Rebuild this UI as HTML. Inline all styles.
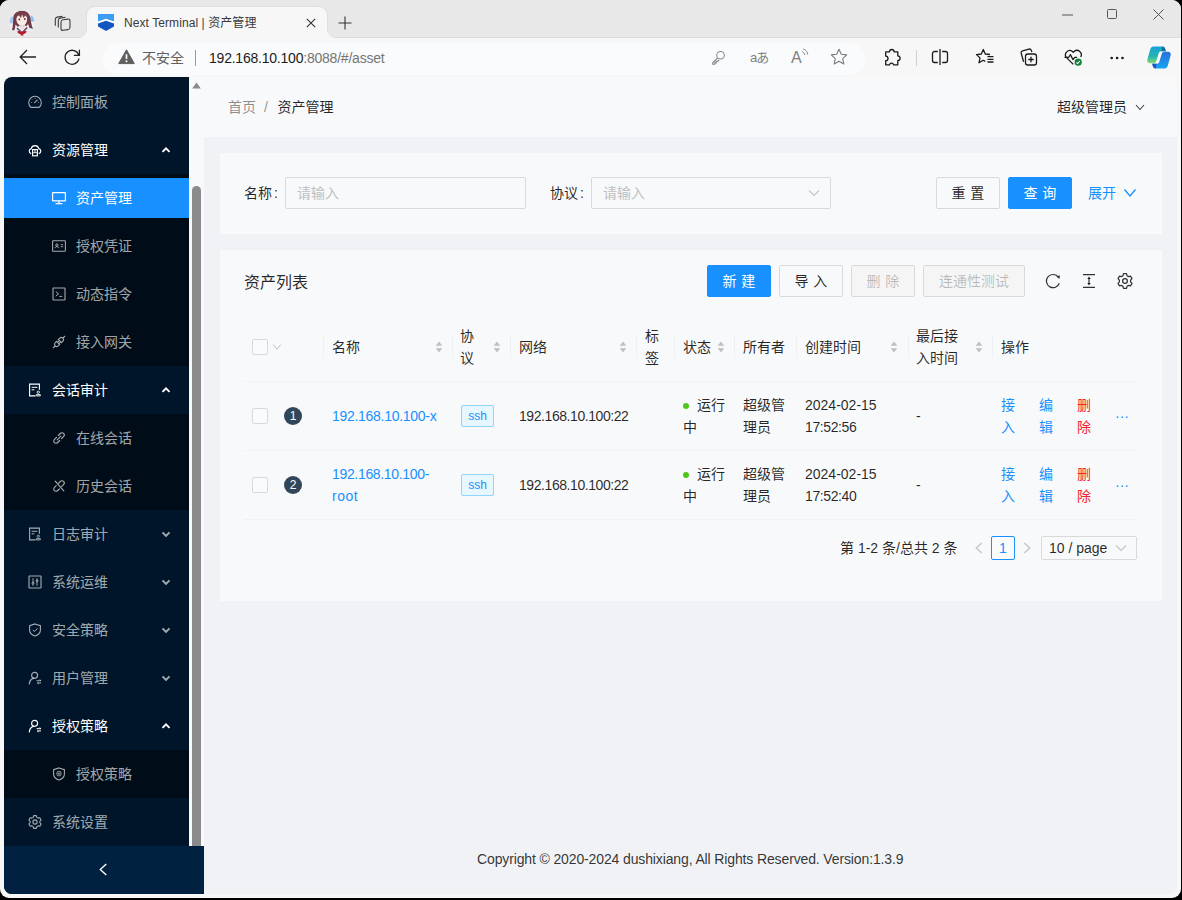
<!DOCTYPE html>
<html lang="zh-CN">
<head>
<meta charset="utf-8">
<title>Next Terminal | 资产管理</title>
<style>
*{box-sizing:border-box}
html,body{margin:0;padding:0}
body{width:1182px;height:900px;overflow:hidden;background:#000;font-family:"Liberation Sans","Noto Sans CJK SC",sans-serif;font-size:14px;color:rgba(0,0,0,.85);position:relative}
.abs{position:absolute}
#win{position:absolute;left:0;top:0;width:1180.5px;height:898px;border-radius:9px;background:#f7f7f8;overflow:hidden}
#titlebar{position:absolute;left:0;top:0;width:100%;height:38px;background:#e8e8e8;border-bottom:1px solid #dcdcdc}
#tab{position:absolute;left:87px;top:7px;width:240px;height:31px;background:#f7f7f8;border-radius:8px 8px 0 0;box-shadow:0 0 2px rgba(0,0,0,.12)}
#tab:before,#tab:after{content:"";position:absolute;bottom:0;width:8px;height:8px}
#tab:before{left:-8px;background:radial-gradient(circle at 0 0,rgba(247,247,248,0) 7.500px,#f7f7f8 8px)}
#tab:after{right:-8px;background:radial-gradient(circle at 100% 0,rgba(247,247,248,0) 7.500px,#f7f7f8 8px)}
#toolbar{position:absolute;left:0;top:38px;width:100%;height:39px;background:#f7f7f8}
#addr{position:absolute;left:103px;top:4.5px;width:762px;height:32px;border-radius:16px;background:#fafbfc}
#page{position:absolute;left:4px;top:77px;width:1173px;height:816.5px;border-radius:8px;overflow:hidden;background:#f0f2f5}
#sider{position:absolute;left:0;top:0;width:200px;height:100%;background:#001529}
#strack{position:absolute;left:185px;top:0;width:15px;height:769px;background:#f8f9fa;overflow:hidden}
#trigger{position:absolute;left:0;top:769px;width:200px;height:48px;background:#002140}
#header{position:absolute;left:200px;top:0;width:973px;height:60px;background:#f8f9fa}
.card{position:absolute;background:#f8f9fa}
.mi{position:absolute;left:0;width:185px;height:48px;line-height:48px;color:rgba(255,255,255,.65);font-size:14px;white-space:nowrap}
.mi .t{position:absolute;left:48px;top:0}
.mi.sub .t{left:72px}
.mi.open{color:#fff}
.mi svg.ic{position:absolute;left:24px;top:17px;width:14px;height:14px}
.mi.sub svg.ic{left:48px}
.mi svg.ar{position:absolute;left:157px;top:19px;width:10px;height:10px}
.subbg{position:absolute;left:0;width:185px;background:#000c17}

#ov{position:absolute;left:0;top:0;width:1182px;height:900px}
#ov .card{position:absolute;background:#f8f9fa}
.t{white-space:nowrap}
.tx{position:absolute;white-space:nowrap;line-height:22px;height:22px}
.inp{position:absolute;height:32px;border:1px solid #d9d9d9;border-radius:2px;background:#f8f9fa;color:#bfbfbf;line-height:30px;padding-left:11px}
.btn{position:absolute;height:32px;border:1px solid #d9d9d9;border-radius:2px;background:#f8f9fa;line-height:30px;text-align:center;white-space:nowrap;color:rgba(0,0,0,.85)}
.btn.pri{background:#1890ff;border-color:#1890ff;color:#fff}
.btn.dis{background:#f5f5f5;color:rgba(0,0,0,.25)}
.vd{position:absolute;width:1px;height:22px;top:336px;background:rgba(0,0,0,.035)}
.hd{position:absolute;left:244px;width:893px;height:1px;background:#f1f2f4}
.cb{position:absolute;width:16px;height:16px;border:1px solid #d9d9d9;border-radius:2px;background:#fafbfc}
.sort{position:absolute;width:8px;height:14px;top:340px}
.blue{color:#1890ff}.red{color:#f5222d}
.idx{position:absolute;width:18px;height:18px;border-radius:9px;background:#314659;color:#fff;font-size:12px;line-height:18px;text-align:center}
.tag{position:absolute;height:22px;border:1px solid #91d5ff;background:#e6f7ff;color:#1890ff;font-size:12px;line-height:20px;border-radius:2px;width:33px;text-align:center}
.dot{position:absolute;width:6px;height:6px;border-radius:3px;background:#52c41a}
</style>
</head>
<body>
<svg width="0" height="0" style="position:absolute">
<defs>
<g id="i-dash" fill="none" stroke="currentColor" stroke-width="1.1"><path d="M2.9 12.4 A6.3 6.3 0 1 1 11.1 12.4 Z"/><path d="M6.6 7.6 9.2 5.2" stroke-linecap="round"/><path d="M7 3v.8M3.3 7.4h.8M10 7.4h.8M4.3 4.6l.5.5" stroke-width=".9"/></g>
<g id="i-cloud" fill="none" stroke="currentColor" stroke-width="1.15"><path d="M3.2 10.6 C.4 9.6.6 6.2 3.3 5.6 4 1.6 10 1.6 10.7 5.6 13.4 6.2 13.6 9.6 10.8 10.6"/><rect x="4.6" y="6.6" width="4.8" height="6.2"/><path d="M4.6 9.7h4.8M7 6.8v2.6" stroke-width=".9"/></g>
<g id="i-desktop" fill="none" stroke="currentColor" stroke-width="1.2"><rect x=".6" y="1.6" width="12.8" height="8.2" rx=".4"/><path d="M7 9.8v2.4M3.6 12.6h6.8"/></g>
<g id="i-idcard" fill="none" stroke="currentColor" stroke-width="1.1"><rect x=".6" y="1.8" width="12.8" height="10.4" rx=".6"/><circle cx="4.9" cy="6.1" r="1.2" stroke-width=".9"/><path d="M2.9 9.2c.3-2 3.700-2 4 0M8.700 5.700h2.500M8.700 7.700h2.500" stroke-width=".9"/></g>
<g id="i-code" fill="none" stroke="currentColor" stroke-width="1.1"><rect x="1" y="1" width="12" height="12" rx=".4"/><path d="M3.800 4.600 6.500 6.800 3.800 9M7.300 9.400h2.900" stroke-width="1"/></g>
<g id="i-api" fill="none" stroke="currentColor" stroke-width="1.1"><path d="M7.600 3.300c1-1 2.300-1 3.200-.1s.9 2.200-.1 3.200L9.500 7.600 6.400 4.500zM6.400 10.700c-1 1-2.300 1-3.200.1s-.9-2.200.1-3.200L4.500 6.400 7.600 9.500zM10.900 3.100 13 1M3.100 10.900 1 13M5.600 7.200 6.800 6M7.200 8.400 8.400 7.200"/></g>
<g id="i-audit" fill="none" stroke="currentColor" stroke-width="1.1"><path d="M7.600 12.900H1.600V1.100h9.800v5.600"/><path d="M3.600 4.300h5.800M3.600 6.800h2.800" stroke-width="1"/><circle cx="10.300" cy="9.200" r="1.150" stroke-width=".9"/><path d="M8.400 12.900v-1.300h3.900v1.300z" stroke-width=".9"/></g>
<g id="i-link" fill="none" stroke="currentColor" stroke-width="1.15" stroke-linecap="round"><path d="M6.300 4.500 8.300 2.500c1-1 2.400-1 3.300-.1s.9 2.300-.1 3.300l-2 2"/><path d="M7.700 9.500l-2 2c-1 1-2.400 1-3.300.1s-.9-2.300.1-3.300l2-2"/><path d="M5.200 8.800 8.800 5.200"/></g>
<g id="i-disc" fill="none" stroke="currentColor" stroke-width="1.15" stroke-linecap="round"><path d="M6.600 4.200 8.300 2.500c1-1 2.400-1 3.300-.1s.9 2.300-.1 3.300L9.800 7.400"/><path d="M7.400 9.800 5.700 11.500c-1 1-2.400 1-3.300.1s-.9-2.300.1-3.300L4.200 6.600"/><path d="M3.200 2.200 11.800 11.800"/></g>
<g id="i-control" fill="none" stroke="currentColor" stroke-width="1.1"><rect x="1" y="1" width="12" height="12" rx=".4"/><path d="M5 3.200v7.600M9 3.200v7.600" stroke-width=".9"/><circle cx="5" cy="8.200" r="1" fill="#001529" stroke-width=".9"/><circle cx="9" cy="5.800" r="1" fill="#001529" stroke-width=".9"/></g>
<g id="i-safety" fill="none" stroke="currentColor" stroke-width="1.1"><path d="M7 .9 12.400 2.700V7.200c0 2.600-2.300 4.700-5.400 5.900C3.900 11.900 1.600 9.800 1.600 7.200V2.700z"/><path d="M4.700 6.800 6.400 8.500 9.500 5.300" stroke-width="1"/></g>
<g id="i-user" fill="none" stroke="currentColor" stroke-width="1.15"><circle cx="6.600" cy="4.300" r="3"/><path d="M1.300 13c.3-3 2.200-5.100 4.300-5.600" stroke-linecap="round"/><path d="M8.600 9.700h4.400M9.200 11.900h3.800" stroke-width="1"/><path d="M11.600 8.600 13 9.700M10.600 13 9.200 11.900" stroke-width=".9"/></g>
<g id="i-insure" fill="none" stroke="currentColor" stroke-width="1.1"><path d="M7 .9 12.400 2.700V7.200c0 2.600-2.300 4.700-5.400 5.900C3.900 11.900 1.600 9.800 1.600 7.200V2.700z"/><rect x="5" y="4.400" width="4" height="4.400" rx="1.400" stroke-width=".9"/><path d="M7 5.200v3M5.700 6.700h2.600" stroke-width=".7"/></g>
<g id="i-setting" fill="none" stroke="currentColor" stroke-width="1.1" stroke-linejoin="round"><path d="M5.700 1h2.600l.5 1.700 1.300.8 1.700-.4 1.300 2.200-1.200 1.300v1.500l1.200 1.300-1.300 2.200-1.700-.4-1.300.8L8.300 13.700H5.700l-.5-1.700-1.300-.8-1.700.4L.9 9.400l1.200-1.300V6.600L.9 5.300 2.200 3.100l1.700.4 1.300-.8z" transform="translate(0 -.35)"/><circle cx="7" cy="7" r="2.100"/></g>
</defs>
</svg>
<div id="win">
 <div id="titlebar">
  <div id="tab"></div>
 </div>
 <div id="toolbar">
  <div id="addr"></div>
 </div>
 <div id="page">
  <div id="sider">
   <div id="menu">
<div class="subbg" style="top:97px;height:192px"></div>
<div class="subbg" style="top:337px;height:96px"></div>
<div class="subbg" style="top:673px;height:48px"></div>
<div class="abs" style="left:0;top:101px;width:185px;height:40px;background:#1890ff"></div>
<div class="mi" style="top:1px"><svg class="ic" viewBox="0 0 14 14"><use href="#i-dash"/></svg><span class="t">控制面板</span></div>
<div class="mi open" style="top:49px"><svg class="ic" viewBox="0 0 14 14"><use href="#i-cloud"/></svg><span class="t">资源管理</span><svg class="ar" viewBox="0 0 10 10"><path d="M1.5 6.8 5 3.3 8.5 6.8" fill="none" stroke="currentColor" stroke-width="1.9"/></svg></div>
<div class="mi sub open" style="top:97px"><svg class="ic" viewBox="0 0 14 14"><use href="#i-desktop"/></svg><span class="t">资产管理</span></div>
<div class="mi sub" style="top:145px"><svg class="ic" viewBox="0 0 14 14"><use href="#i-idcard"/></svg><span class="t">授权凭证</span></div>
<div class="mi sub" style="top:193px"><svg class="ic" viewBox="0 0 14 14"><use href="#i-code"/></svg><span class="t">动态指令</span></div>
<div class="mi sub" style="top:241px"><svg class="ic" viewBox="0 0 14 14"><use href="#i-api"/></svg><span class="t">接入网关</span></div>
<div class="mi open" style="top:289px"><svg class="ic" viewBox="0 0 14 14"><use href="#i-audit"/></svg><span class="t">会话审计</span><svg class="ar" viewBox="0 0 10 10"><path d="M1.5 6.8 5 3.3 8.5 6.8" fill="none" stroke="currentColor" stroke-width="1.9"/></svg></div>
<div class="mi sub" style="top:337px"><svg class="ic" viewBox="0 0 14 14"><use href="#i-link"/></svg><span class="t">在线会话</span></div>
<div class="mi sub" style="top:385px"><svg class="ic" viewBox="0 0 14 14"><use href="#i-disc"/></svg><span class="t">历史会话</span></div>
<div class="mi" style="top:433px"><svg class="ic" viewBox="0 0 14 14"><use href="#i-audit"/></svg><span class="t">日志审计</span><svg class="ar" viewBox="0 0 10 10"><path d="M1.5 3.3 5 6.8 8.5 3.3" fill="none" stroke="currentColor" stroke-width="1.9"/></svg></div>
<div class="mi" style="top:481px"><svg class="ic" viewBox="0 0 14 14"><use href="#i-control"/></svg><span class="t">系统运维</span><svg class="ar" viewBox="0 0 10 10"><path d="M1.5 3.3 5 6.8 8.5 3.3" fill="none" stroke="currentColor" stroke-width="1.9"/></svg></div>
<div class="mi" style="top:529px"><svg class="ic" viewBox="0 0 14 14"><use href="#i-safety"/></svg><span class="t">安全策略</span><svg class="ar" viewBox="0 0 10 10"><path d="M1.5 3.3 5 6.8 8.5 3.3" fill="none" stroke="currentColor" stroke-width="1.9"/></svg></div>
<div class="mi" style="top:577px"><svg class="ic" viewBox="0 0 14 14"><use href="#i-user"/></svg><span class="t">用户管理</span><svg class="ar" viewBox="0 0 10 10"><path d="M1.5 3.3 5 6.8 8.5 3.3" fill="none" stroke="currentColor" stroke-width="1.9"/></svg></div>
<div class="mi open" style="top:625px"><svg class="ic" viewBox="0 0 14 14"><use href="#i-user"/></svg><span class="t">授权策略</span><svg class="ar" viewBox="0 0 10 10"><path d="M1.5 6.8 5 3.3 8.5 6.8" fill="none" stroke="currentColor" stroke-width="1.9"/></svg></div>
<div class="mi sub" style="top:673px"><svg class="ic" viewBox="0 0 14 14"><use href="#i-insure"/></svg><span class="t">授权策略</span></div>
<div class="mi" style="top:721px"><svg class="ic" viewBox="0 0 14 14"><use href="#i-setting"/></svg><span class="t">系统设置</span></div>
</div>
   <div id="strack"><svg class="abs" style="left:3px;top:5px" width="9" height="7" viewBox="0 0 9 7"><path d="M4.500.4 8.800 6.400H.2z" fill="#8a8a8a"/></svg><div class="abs" style="left:3px;top:109px;width:9px;height:664px;border-radius:4.500px;background:#8b8b8b"></div></div>
   <div id="trigger"><svg class="abs" style="left:94px;top:17px" width="10" height="13" viewBox="0 0 10 13"><path d="M8.300 1 2.300 6.500 8.300 12" fill="none" stroke="#fff" stroke-width="1.400"/></svg></div>
  </div>
  <div id="header"></div>
  <div id="content"></div>
 </div>
 <div id="ov">
<!--CH-->
<!-- title bar -->
<svg class="abs" id="avatar" style="left:9px;top:10px" width="26" height="26" viewBox="0 0 26 26"><defs><clipPath id="avc"><circle cx="13" cy="13" r="12.500"/></clipPath><filter id="avb" x="-10%" y="-10%" width="120%" height="120%"><feGaussianBlur stdDeviation=".55"/></filter></defs><g clip-path="url(#avc)"><rect width="26" height="26" fill="#f1eff6"/><g filter="url(#avb)"><ellipse cx="2.500" cy="10" rx="2.600" ry="3.500" fill="#a9c6f2"/><ellipse cx="23.500" cy="8.500" rx="2.300" ry="3.200" fill="#8fbef0"/><path d="M4.500 6C6 2 10 .6 13.500.8 18 1 20.500 3.500 21.300 7.500c.7 4 1.200 8 2.700 11.200l-3.500-.7L19 14l-2.500 3.500h-7L6.500 14.500 5.500 21 3 20c1.200-4 1-9.500 1.500-14z" fill="#6e3c47"/><path d="M7.500 7.500c1-2 3.300-3 5.500-3s4.300 1 5 3c.5 2.500-.2 5.300-1.800 6.900-1.200 1.200-2.300 1.700-3.400 1.700s-2.600-.7-3.700-2C7.600 12.500 7 9.800 7.500 7.500z" fill="#f8ebe4"/><path d="M7 8.500 9.200 4.500 12 8.200 13 4.200 14.500 8 17 4.600 18.800 8.800 19.500 4 13 1.500 6.500 4z" fill="#7a3f4a"/><circle cx="10.300" cy="9.500" r=".9" fill="#8c2230"/><circle cx="15.800" cy="9" r=".9" fill="#6b2a2a"/><path d="M10.500 15.500 13 18.500 15.500 15 17.500 16.500 22 19v8H4v-6l4.500-4z" fill="#ece7f2"/><path d="M10.800 15.300h4.200L13 21z" fill="#f6dcd8"/><path d="M8.500 17.500 13 22l4.500-5 1.200 1L13 24 7.500 18.500z" fill="#5a4a5c"/><path d="M8 21.500c2-1 3.500-.5 5 .3 1.500-.8 3.200-1.300 5-.2-.8 1.600-2.500 2.500-4 2.600l1.500 2.500h-5l1.500-2.500c-1.600 0-3.200-1-4-2.700z" fill="#b31d2b"/></g></g></svg>
<svg class="abs" style="left:53px;top:13px" width="20" height="20" viewBox="0 0 20 20" fill="none" stroke="#3b3b3b" stroke-width="1.1"><rect x="8" y="6.500" width="9" height="10.500" rx="2" transform="skewY(-8) translate(0 1.700)"/><path d="M5.300 14.500V7.300c0-1.200.7-2 1.800-2.200l5.400-.9M2.300 12.800V6.300c0-1.200.7-2 1.800-2.200l5.400-.9"/></svg>
<svg class="abs" style="left:98px;top:14px" width="16" height="17" viewBox="0 0 16 17"><path d="M0 0h16v7.500l-8 2.600-8-2.600z" fill="#3d9df5"/><path d="M0 8.700 8 6.100l8 2.600v3.900L8 17 0 12.600z" fill="#1356c2"/><path d="M0 7.400 8 4.800l8 2.600v2L8 6.800 0 9.400z" fill="#fff"/></svg>
<div class="abs" id="tabtitle" style="left:124px;top:13px;height:20px;line-height:20px;font-size:12px;color:#3a3a3a;white-space:nowrap;letter-spacing:.08px">Next Terminal | 资产管理</div>
<svg class="abs" style="left:306px;top:18px" width="10" height="10" viewBox="0 0 10 10"><path d="M.8.800 9.200 9.200M9.200.8.800 9.200" stroke="#333" stroke-width="1.100" fill="none"/></svg>
<svg class="abs" style="left:338px;top:16px" width="14" height="14" viewBox="0 0 14 14"><path d="M7 .5v13M.5 7h13" stroke="#333" stroke-width="1.100" fill="none"/></svg>
<svg class="abs" style="left:1062px;top:14px" width="11" height="2" viewBox="0 0 11 2"><path d="M0 1h11" stroke="#555" stroke-width="1"/></svg>
<div class="abs" style="left:1107px;top:9px;width:10px;height:10px;border:1px solid #555;border-radius:1.500px"></div>
<svg class="abs" style="left:1153px;top:9px" width="11" height="11" viewBox="0 0 11 11"><path d="M.5.500 10.500 10.500M10.500.5.500 10.500" stroke="#555" stroke-width="1" fill="none"/></svg>
<!-- toolbar -->
<svg class="abs" style="left:19px;top:49px" width="18" height="16" viewBox="0 0 18 16" fill="none" stroke="#222" stroke-width="1.300"><path d="M17 8H1.500M8 1 1.200 8 8 15"/></svg>
<svg class="abs" style="left:63px;top:48px" width="18" height="18" viewBox="0 0 18 18" fill="none" stroke="#222" stroke-width="1.300"><path d="M15.800 7.200A7 7 0 1 0 16 10.500"/><path d="M16.400 1.800v5.500h-5.500"/></svg>
<svg class="abs" style="left:118px;top:49px" width="17" height="16" viewBox="0 0 17 16"><path d="M8.500.8 16.300 14.600H.7z" fill="#5f5f5f" stroke="#5f5f5f" stroke-width="1" stroke-linejoin="round"/><path d="M8.500 5.300v4.700" stroke="#fcfcfc" stroke-width="1.700"/><circle cx="8.500" cy="12.300" r="1" fill="#fcfcfc"/></svg>
<div class="abs" style="left:142px;top:47px;height:22px;line-height:22px;font-size:14px;color:#5f5f5f;white-space:nowrap" id="unsafe">不安全</div>
<div class="abs" style="left:195px;top:50px;width:1px;height:16px;background:#9a9a9a"></div>
<div class="abs" id="url" style="left:209px;top:47px;height:22px;line-height:22px;font-size:14px;color:#1b1b1b;white-space:nowrap;letter-spacing:-.22px">192.168.10.100<span style="color:#757575">:8088/#/asset</span></div>
<!-- pill icons -->
<svg class="abs" style="left:711px;top:50px" width="15" height="15" viewBox="0 0 17 17" fill="none" stroke="#858585" stroke-width="1.200"><circle cx="10.800" cy="6" r="4.300"/><path d="M7.600 8.900 2 14.500v1.700h2.300v-1.600h1.600v-1.700h1.500l1.700-1.700"/></svg>
<div class="abs" style="left:750px;top:47px;height:22px;line-height:22px;font-size:13px;color:#808080;white-space:nowrap;font-family:'Liberation Sans','Noto Sans CJK JP',sans-serif;letter-spacing:-1px">aあ</div>
<div class="abs" style="left:791px;top:47px;height:22px;line-height:22px;font-size:16px;color:#808080;white-space:nowrap">A</div>
<svg class="abs" style="left:801px;top:48px" width="9" height="10" viewBox="0 0 9 10" fill="none" stroke="#858585" stroke-width="1"><path d="M1.200 3.600c1.500.6 2.300 1.800 2.600 3.400M2.300.9C5 1.900 6.400 4 6.800 6.600"/></svg>
<svg class="abs" style="left:830px;top:48px" width="18" height="18" viewBox="0 0 18 18" fill="none" stroke="#7a7a7a" stroke-width="1.100" stroke-linejoin="round"><path d="M9 1.300 11.300 6.300 16.700 6.900 12.700 10.600 13.800 16 9 13.300 4.200 16 5.300 10.600 1.300 6.900 6.700 6.300z"/></svg>
<!-- outer icons -->
<svg class="abs" style="left:883px;top:48px" width="18" height="19" viewBox="0 0 18 19" fill="none" stroke="#1b1b1b" stroke-width="1.300" stroke-linejoin="round"><path d="M6.500 3.800a2.300 2.300 0 0 1 4.600 0h3.700v4.100a2.300 2.300 0 0 1 0 4.600v4.300h-4.200a2.100 2.100 0 0 0-4.100 0H2.700v-4.100a2.300 2.300 0 0 0 0-4.600V3.800z"/></svg>
<div class="abs" style="left:916px;top:50px;width:1px;height:16px;background:#d0d0d0"></div>
<svg class="abs" style="left:931px;top:48px" width="18" height="18" viewBox="0 0 18 18" fill="none" stroke="#1b1b1b" stroke-width="1.300"><path d="M6.800 3.500H3.500a2 2 0 0 0-2 2v7a2 2 0 0 0 2 2h3.300M11.200 3.500h3.300a2 2 0 0 1 2 2v7a2 2 0 0 1-2 2h-3.300M9 1v16"/></svg>
<svg class="abs" style="left:975px;top:48px" width="20" height="18" viewBox="0 0 20 18" fill="none" stroke="#1b1b1b" stroke-width="1.300" stroke-linejoin="round"><path d="M8.300 1.500 10.300 6l4.700.5M10.300 6 8.300 1.500 6.300 6 1.500 6.600 5 9.900 4 14.800 8.300 12.300 10.200 13.400M12.500 8.600h6M12.500 11.300h6M12.500 14h6"/></svg>
<svg class="abs" style="left:1019px;top:47px" width="20" height="20" viewBox="0 0 20 20" fill="none" stroke="#1b1b1b" stroke-width="1.300"><rect x="6.500" y="7" width="11" height="11" rx="2.300"/><path d="M12 9.800v5.400M9.300 12.500h5.400M4.600 14.800 2.200 6.300a2 2 0 0 1 1.400-2.500l6.300-1.700a2 2 0 0 1 2.400 1.300l.6 1.700"/></svg>
<svg class="abs" style="left:1063px;top:48px" width="22" height="20" viewBox="0 0 22 20" fill="none" stroke="#1b1b1b" stroke-width="1.300" stroke-linejoin="round"><path d="M10.300 16.400 3.500 9.600a4.300 4.300 0 0 1 6-6.100l.8.800.8-.8a4.300 4.300 0 0 1 6.500 5.500"/><path d="M1.500 9.300h4.300l1.600-2.700 2.600 5 1.700-2.300h2.400" stroke-width="1.200"/><circle cx="15.200" cy="14.200" r="3.600" fill="#15803d" stroke="none"/><path d="M13.500 14.300 14.700 15.500 16.900 13" stroke="#fff" stroke-width="1.100"/></svg>
<svg class="abs" style="left:1109px;top:56px" width="17" height="4" viewBox="0 0 17 4"><circle cx="2.700" cy="2" r="1.350" fill="#1b1b1b"/><circle cx="8.100" cy="2" r="1.350" fill="#1b1b1b"/><circle cx="13.500" cy="2" r="1.350" fill="#1b1b1b"/></svg>
<svg class="abs" style="left:1146px;top:45px" width="26" height="25" viewBox="0 0 26 25"><defs><linearGradient id="cg1" x1="0" y1="0" x2="0" y2="1"><stop offset="0" stop-color="#1aa0d8"/><stop offset=".6" stop-color="#22b5b0"/><stop offset="1" stop-color="#8fd96a"/></linearGradient><linearGradient id="cg2" x1="0" y1="0" x2="0" y2="1"><stop offset="0" stop-color="#2a6fe0"/><stop offset="1" stop-color="#18a4ee"/></linearGradient></defs><path d="M7.500 1.500h8.800c1.300 0 2.300.8 2.700 2l.8 2.700h-4.300c-1.500 0-2.400.8-2.900 2.300l-2.300 7.500c-.5 1.500-1.600 2.300-3.100 2.300H3.900c-1.900 0-3.100-1.600-2.600-3.500l2.900-10.300C4.700 2.600 5.900 1.500 7.500 1.500z" fill="url(#cg1)"/><path d="M18.500 23.500H9.700c-1.300 0-2.300-.8-2.700-2l-.8-2.700h4.300c1.500 0 2.400-.8 2.900-2.300l2.300-7.500c.5-1.500 1.600-2.300 3.100-2.300h3.300c1.900 0 3.100 1.600 2.600 3.500l-2.900 10.300c-.5 1.900-1.700 3-3.300 3z" fill="url(#cg2)"/><path d="M16.300 1.500c1.300 0 2.300.8 2.700 2l.8 2.700h-4.300z" fill="#0d6fa0"/><path d="M9.700 23.500c-1.300 0-2.300-.8-2.700-2l-.8-2.700h4.300z" fill="#2450c8"/></svg>
<!--/CH-->
<!--OV-->
<!-- header -->
<div class="tx" style="left:228px;top:96px;color:rgba(0,0,0,.45)">首页<span style="margin:0 9.500px 0 8px">/</span><span style="color:rgba(0,0,0,.85)">资产管理</span></div>
<div class="tx" style="left:1057px;top:96px">超级管理员</div>
<svg class="abs" style="left:1135px;top:102px" width="10" height="10" viewBox="0 0 10 10"><path d="M1 3 5 7.500 9 3" fill="none" stroke="rgba(0,0,0,.75)" stroke-width="1.1"/></svg>
<!-- search card -->
<div class="card" style="left:220px;top:153px;width:942px;height:81px"></div>
<div class="tx" style="left:244px;top:182px">名称<span style="margin-left:2px">:</span></div>
<div class="inp" style="left:285px;top:177px;width:241px">请输入</div>
<div class="tx" style="left:550px;top:182px">协议<span style="margin-left:2px">:</span></div>
<div class="inp" style="left:591px;top:177px;width:240px">请输入</div>
<svg class="abs" style="left:808px;top:188px" width="12" height="10" viewBox="0 0 12 10"><path d="M1 2.500 6 7.500 11 2.500" fill="none" stroke="#c4c4c4" stroke-width="1.1"/></svg>
<div class="btn" style="left:936px;top:177px;width:64px;letter-spacing:4.76px;padding-left:4.76px">重置</div>
<div class="btn pri" style="left:1008px;top:177px;width:64px;letter-spacing:4.76px;padding-left:4.76px">查询</div>
<div class="tx blue" style="left:1088px;top:182px">展开</div>
<svg class="abs" style="left:1123px;top:187px" width="14" height="12" viewBox="0 0 14 12"><path d="M1.500 2.500 7 9 12.500 2.500" fill="none" stroke="#1890ff" stroke-width="1.3"/></svg>
<!-- table card -->
<div class="card" style="left:220px;top:250px;width:942px;height:351px"></div>
<div class="tx" style="left:244px;top:271.5px;font-size:16px">资产列表</div>
<div class="btn pri" style="left:707px;top:265px;width:64px;letter-spacing:4.76px;padding-left:4.76px">新建</div>
<div class="btn" style="left:779px;top:265px;width:64px;letter-spacing:4.76px;padding-left:4.76px">导入</div>
<div class="btn dis" style="left:851px;top:265px;width:64px;letter-spacing:4.76px;padding-left:4.76px">删除</div>
<div class="btn dis" style="left:923px;top:265px;width:102px">连通性测试</div>
<svg class="abs" style="left:1045px;top:273px" width="16" height="16" viewBox="0 0 16 16"><path d="M13 3.700A6.600 6.600 0 1 0 14.300 10.300" fill="none" stroke="rgba(0,0,0,.8)" stroke-width="1.200"/><path d="M11.500 3.700 14.800 2.300 14.500 6z" fill="rgba(0,0,0,.8)"/></svg>
<svg class="abs" style="left:1081px;top:273px" width="16" height="16" viewBox="0 0 16 16"><path d="M2 1.600h12M2 14.400h12M8 5v6" fill="none" stroke="rgba(0,0,0,.8)" stroke-width="1.200"/><path d="M8 3.400 6.300 6h3.400zM8 12.600 6.300 10h3.400z" fill="rgba(0,0,0,.8)"/></svg>
<svg class="abs" style="left:1117px;top:273px;color:rgba(0,0,0,.8)" width="16" height="16" viewBox="0 0 14 14"><use href="#i-setting"/></svg>
<!-- table header -->
<div class="cb" style="left:252px;top:339px"></div>
<svg class="abs" style="left:272px;top:342px" width="10" height="10" viewBox="0 0 10 10"><path d="M1.200 2.500 5 7.200 8.800 2.500" fill="none" stroke="#bfbfbf" stroke-width="1"/></svg>
<div class="vd" style="left:323px"></div><div class="vd" style="left:452px"></div><div class="vd" style="left:510px"></div><div class="vd" style="left:636px"></div><div class="vd" style="left:674px"></div><div class="vd" style="left:734px"></div><div class="vd" style="left:796px"></div><div class="vd" style="left:908px"></div><div class="vd" style="left:992px"></div>
<div class="tx" style="left:332px;top:336px">名称</div>
<div class="tx" style="left:460px;top:325px">协</div><div class="tx" style="left:460px;top:347px">议</div>
<div class="tx" style="left:519px;top:336px">网络</div>
<div class="tx" style="left:645px;top:325px">标</div><div class="tx" style="left:645px;top:347px">签</div>
<div class="tx" style="left:683px;top:336px">状态</div>
<div class="tx" style="left:743px;top:336px">所有者</div>
<div class="tx" style="left:805px;top:336px">创建时间</div>
<div class="tx" style="left:916px;top:325px">最后接</div><div class="tx" style="left:916px;top:347px">入时间</div>
<div class="tx" style="left:1001px;top:336px">操作</div>
<svg class="sort" style="left:435px" viewBox="0 0 8 14"><path d="M4 1.500 7.300 5.800H.7z" fill="#bfbfbf"/><path d="M4 12.500 7.300 8.200H.7z" fill="#bfbfbf"/></svg>
<svg class="sort" style="left:493px" viewBox="0 0 8 14"><path d="M4 1.500 7.300 5.800H.7z" fill="#bfbfbf"/><path d="M4 12.500 7.300 8.200H.7z" fill="#bfbfbf"/></svg>
<svg class="sort" style="left:619px" viewBox="0 0 8 14"><path d="M4 1.500 7.300 5.800H.7z" fill="#bfbfbf"/><path d="M4 12.500 7.300 8.200H.7z" fill="#bfbfbf"/></svg>
<svg class="sort" style="left:717px" viewBox="0 0 8 14"><path d="M4 1.500 7.300 5.800H.7z" fill="#bfbfbf"/><path d="M4 12.500 7.300 8.200H.7z" fill="#bfbfbf"/></svg>
<svg class="sort" style="left:890px" viewBox="0 0 8 14"><path d="M4 1.500 7.300 5.800H.7z" fill="#bfbfbf"/><path d="M4 12.500 7.300 8.200H.7z" fill="#bfbfbf"/></svg>
<svg class="sort" style="left:975px" viewBox="0 0 8 14"><path d="M4 1.500 7.300 5.800H.7z" fill="#bfbfbf"/><path d="M4 12.500 7.300 8.200H.7z" fill="#bfbfbf"/></svg>
<div class="hd" style="top:381px"></div><div class="hd" style="top:450px"></div><div class="hd" style="top:519px"></div>
<!-- row 1 -->
<div class="cb" style="left:252px;top:408px"></div>
<div class="idx" style="left:284px;top:407px">1</div>
<div class="tx blue" style="left:332px;top:405px;letter-spacing:-.29px">192.168.10.100-x</div>
<div class="tag" style="left:461px;top:405px">ssh</div>
<div class="tx" style="left:519px;top:405px;letter-spacing:-.43px">192.168.10.100:22</div>
<div class="dot" style="left:683px;top:403px"></div>
<div class="tx" style="left:697px;top:394px">运行</div><div class="tx" style="left:683px;top:416px">中</div>
<div class="tx" style="left:743px;top:394px">超级管</div><div class="tx" style="left:743px;top:416px">理员</div>
<div class="tx" style="left:805px;top:394px">2024-02-15</div><div class="tx" style="left:805px;top:416px;letter-spacing:-.39px">17:52:56</div>
<div class="tx" style="left:916px;top:405px">-</div>
<div class="tx blue" style="left:1001px;top:394px">接</div><div class="tx blue" style="left:1001px;top:416px">入</div>
<div class="tx blue" style="left:1039px;top:394px">编</div><div class="tx blue" style="left:1039px;top:416px">辑</div>
<div class="tx red" style="left:1077px;top:394px">删</div><div class="tx red" style="left:1077px;top:416px">除</div>
<div class="tx blue" style="left:1115px;top:405px">···</div>
<!-- row 2 -->
<div class="cb" style="left:252px;top:477px"></div>
<div class="idx" style="left:284px;top:476px">2</div>
<div class="tx blue" style="left:332px;top:463px;letter-spacing:-.33px">192.168.10.100-</div><div class="tx blue" style="left:332px;top:485px;letter-spacing:.47px">root</div>
<div class="tag" style="left:461px;top:474px">ssh</div>
<div class="tx" style="left:519px;top:474px;letter-spacing:-.43px">192.168.10.100:22</div>
<div class="dot" style="left:683px;top:472px"></div>
<div class="tx" style="left:697px;top:463px">运行</div><div class="tx" style="left:683px;top:485px">中</div>
<div class="tx" style="left:743px;top:463px">超级管</div><div class="tx" style="left:743px;top:485px">理员</div>
<div class="tx" style="left:805px;top:463px">2024-02-15</div><div class="tx" style="left:805px;top:485px;letter-spacing:-.39px">17:52:40</div>
<div class="tx" style="left:916px;top:474px">-</div>
<div class="tx blue" style="left:1001px;top:463px">接</div><div class="tx blue" style="left:1001px;top:485px">入</div>
<div class="tx blue" style="left:1039px;top:463px">编</div><div class="tx blue" style="left:1039px;top:485px">辑</div>
<div class="tx red" style="left:1077px;top:463px">删</div><div class="tx red" style="left:1077px;top:485px">除</div>
<div class="tx blue" style="left:1115px;top:474px">···</div>
<!-- pagination -->
<div class="tx" style="left:840px;top:537px">第 1-2 条/总共 2 条</div>
<svg class="abs" style="left:973px;top:542px" width="12" height="12" viewBox="0 0 10 10"><path d="M7.300 .8 2.700 5 7.300 9.200" fill="none" stroke="#c4c4c4" stroke-width="1.1"/></svg>
<div class="abs blue" style="left:991px;top:536px;width:24px;height:24px;border:1px solid #1890ff;border-radius:2px;line-height:22px;text-align:center;background:#fafbfc">1</div>
<svg class="abs" style="left:1021px;top:542px" width="12" height="12" viewBox="0 0 10 10"><path d="M2.700 .8 7.300 5 2.700 9.200" fill="none" stroke="#c4c4c4" stroke-width="1.1"/></svg>
<div class="abs" style="left:1041px;top:536px;width:96px;height:24px;border:1px solid #d9d9d9;border-radius:2px;line-height:22px;padding-left:7px;background:#f8f9fa;white-space:nowrap">10 / page</div>
<svg class="abs" style="left:1115px;top:543px" width="12" height="10" viewBox="0 0 12 10"><path d="M1 2.500 6 7.500 11 2.500" fill="none" stroke="#c4c4c4" stroke-width="1.1"/></svg>
<!-- footer -->
<div class="tx" id="foot" style="left:477px;top:848px;color:rgba(0,0,0,.8);letter-spacing:-.13px">Copyright © 2020-2024 dushixiang, All Rights Reserved. Version:1.3.9</div>
<!--/OV-->
 </div>
</div>
</body>
</html>
